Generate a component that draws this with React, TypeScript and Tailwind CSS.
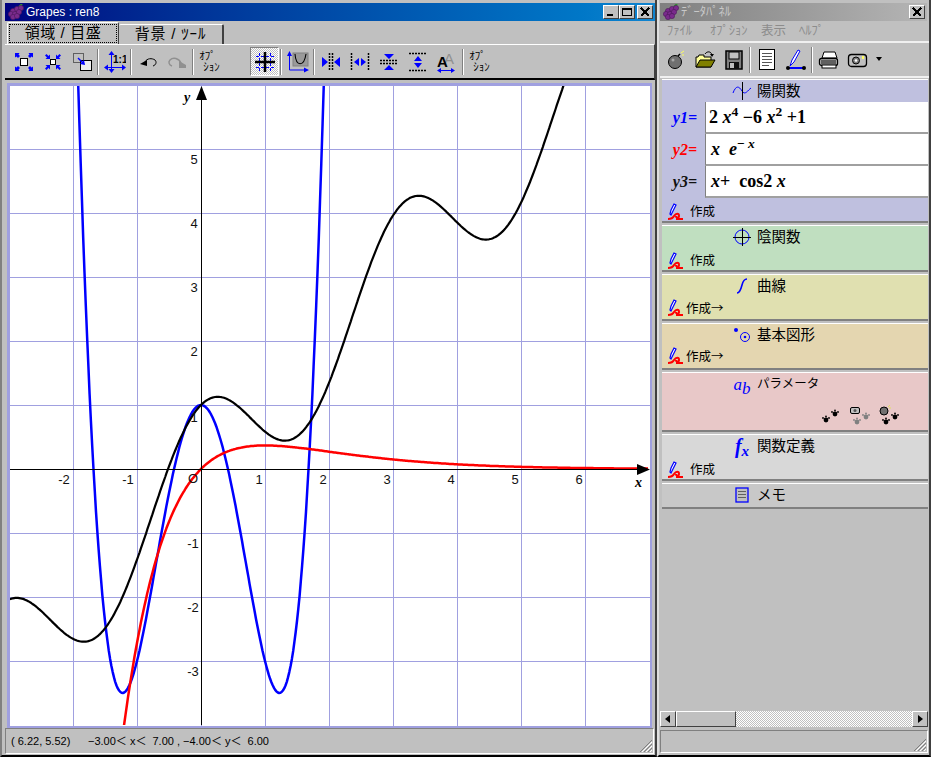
import type { ReactNode } from "react";

const X0 = 194; // x=0 within the plot svg
const Y0 = 386; // y=0 within the plot svg
const U = 64;

const raised = "border border-t-white border-l-white border-r-[#404040] border-b-[#404040] bg-[#c0c0c0]";
const dither = "bg-[repeating-conic-gradient(#c0c0c0_0_25%,#fff_0_50%)] bg-[length:2px_2px]";

function curve(f: (x: number) => number) {
  let d = "";
  let pen = false;
  for (let x = -3; x <= 7; x += 0.02) {
    const y = f(x);
    if (y > 7 || y < -5) {
      pen = false;
      continue;
    }
    d += `${pen ? "L" : "M"}${(X0 + x * U).toFixed(1)} ${(Y0 - y * U).toFixed(1)} `;
    pen = true;
  }
  return d;
}

function Plot() {
  const vs = [-2, -1, 0, 1, 2, 3, 4, 5, 6];
  const hs = [-3, -2, -1, 1, 2, 3, 4, 5];
  return (
    <svg width="645" height="645" className="block bg-white">
      <defs>
        <clipPath id="plot">
          <rect x="2" y="3" width="639" height="639" />
        </clipPath>
      </defs>
      <g stroke="#a0a0e0" shapeRendering="crispEdges">
        {vs.map((v) => (
          <line key={v} x1={X0 + v * U + 0.5} x2={X0 + v * U + 0.5} y1="0" y2="645" />
        ))}
        {hs.map((h) => (
          <line key={h} y1={Y0 - h * U + 0.5} y2={Y0 - h * U + 0.5} x1="0" x2="645" />
        ))}
      </g>
      <g clipPath="url(#plot)" fill="none" strokeLinejoin="round">
        <path d={curve((x) => 2 * x ** 4 - 6 * x ** 2 + 1)} stroke="#0000ff" strokeWidth="2.5" />
        <path d={curve((x) => x + Math.cos(2 * x))} stroke="#000" strokeWidth="2.2" />
        <path d={curve((x) => x * Math.exp(-x))} stroke="#ff0000" strokeWidth="2.5" />
      </g>
      <g stroke="#000" shapeRendering="crispEdges">
        <line x1="2" x2="632" y1={Y0 + 0.5} y2={Y0 + 0.5} />
        <line x1={X0 + 0.5} x2={X0 + 0.5} y1="14" y2="642" />
      </g>
      <path d={`M${X0 + 0.5} 3 L${X0 - 5} 17 L${X0 + 6} 17 Z`} fill="#000" />
      <path d={`M643 ${Y0 + 0.5} L630 ${Y0 - 5} L630 ${Y0 + 6} Z`} fill="#000" />
      <g fontFamily="Liberation Sans" fontSize="13" fill="#111">
        {[-2, -1, 1, 2, 3, 4, 5, 6].map((v) => (
          <text key={v} x={X0 + v * U + (v < 0 ? -9 : -6)} y={Y0 + 15} textAnchor="middle">
            {v}
          </text>
        ))}
        <text x={X0 - 8} y={Y0 + 14} textAnchor="middle">O</text>
        {[5, 4, 3, 2, 1].map((h) => (
          <text key={h} x={X0 - 7} y={Y0 - h * U + (h === 1 ? 17 : 15)} textAnchor="middle">
            {h}
          </text>
        ))}
        {[-1, -2, -3].map((h) => (
          <text key={h} x={X0 - 8} y={Y0 - h * U + 15} textAnchor="middle">
            {h}
          </text>
        ))}
      </g>
      <g fontFamily="Liberation Serif" fontSize="14" fontWeight="bold" fontStyle="italic" fill="#000">
        <text x="628" y={Y0 + 18}>x</text>
        <text x={X0 - 17} y="19">y</text>
      </g>
      <rect x="1" y="1" width="643" height="643" fill="none" stroke="#a0a0e0" strokeWidth="3" shapeRendering="crispEdges" />
    </svg>
  );
}

function Grape({ size = 16 }: { size?: number }) {
  const dots = [
    [5, 7], [9, 5], [13, 4], [3, 10], [7, 10], [11, 8], [5, 13], [9, 12],
  ];
  return (
    <svg width={size} height={size} viewBox="0 0 16 16" className="shrink-0">
      <path d="M11 3 L14 0" stroke="#2f8f2f" strokeWidth="2" />
      {dots.map(([x, y]) => (
        <circle key={`${x}-${y}`} cx={x} cy={y} r="2.6" fill="#7a2a8c" stroke="#4b1a5a" strokeWidth="0.6" />
      ))}
    </svg>
  );
}

function WinBtn({ children, className }: { children: ReactNode; className?: string }) {
  return (
    <div className={`flex h-[14px] w-[16px] items-center justify-center ${raised} ${className ?? ""}`}>
      <svg width="12" height="10" viewBox="0 0 12 10" shapeRendering="crispEdges">
        {children}
      </svg>
    </div>
  );
}

const Close = () => <path d="M2 1 L10 9 M10 1 L2 9" stroke="#000" strokeWidth="1.6" />;

function Ic({ children }: { children: ReactNode }) {
  return (
    <svg width="22" height="22" viewBox="0 0 22 22" className="block">
      {children}
    </svg>
  );
}

function Btn({ children, pressed }: { children: ReactNode; pressed?: boolean }) {
  return (
    <div
      className={`flex h-[29px] w-[29px] shrink-0 items-center justify-center ${
        pressed ? `border border-t-[#808080] border-l-[#808080] border-r-white border-b-white ${dither}` : ""
      }`}
    >
      {children}
    </div>
  );
}

function Sep({ className }: { className?: string }) {
  return <div className={`mx-px h-[26px] w-[2px] shrink-0 border-l border-l-[#808080] border-r border-r-white ${className ?? ""}`} />;
}

function OptBtn() {
  return (
    <Btn>
      <div className="text-[11px] leading-[11px] text-black">
        <div>ｵﾌﾟ</div>
        <div className="pl-[4px]">ｼｮﾝ</div>
      </div>
    </Btn>
  );
}

const B = "#0000ff";
const Arrow = ({ d }: { d: string }) => <path d={d} fill={B} />;

function ZoomOutIcon() {
  return (
    <Ic>
      <rect x="7.5" y="7.5" width="7" height="7" fill="#fff" stroke="#000" />
      <Arrow d="M2 2 H6.5 L5.5 3.5 L7 5 L5 7 L3.5 5.5 L2 6.5 Z" />
      <Arrow d="M20 2 H15.5 L16.5 3.5 L15 5 L17 7 L18.5 5.5 L20 6.5 Z" />
      <Arrow d="M2 20 H6.5 L5.5 18.5 L7 17 L5 15 L3.5 16.5 L2 15.5 Z" />
      <Arrow d="M20 20 H15.5 L16.5 18.5 L15 17 L17 15 L18.5 16.5 L20 15.5 Z" />
    </Ic>
  );
}

function ZoomInIcon() {
  return (
    <Ic>
      <rect x="8.5" y="8.5" width="5" height="5" fill="#fff" stroke="#000" />
      <Arrow d="M8 8 H3.5 L5 6.5 L3 4.5 L4.5 3 L6.5 5 L8 3.5 Z" />
      <Arrow d="M14 8 H18.5 L17 6.5 L19 4.5 L17.5 3 L15.5 5 L14 3.5 Z" />
      <Arrow d="M8 14 H3.5 L5 15.5 L3 17.5 L4.5 19 L6.5 17 L8 18.5 Z" />
      <Arrow d="M14 14 H18.5 L17 15.5 L19 17.5 L17.5 19 L15.5 17 L14 18.5 Z" />
    </Ic>
  );
}

function MoveIcon() {
  return (
    <Ic>
      <rect x="2.5" y="2.5" width="10" height="9" fill="none" stroke="#000" strokeDasharray="1 1" />
      <rect x="9.5" y="9.5" width="11" height="10" fill="#eee" stroke="#000" />
      <path d="M7 7 L12 12" stroke={B} strokeWidth="1.4" />
      <path d="M14 14 L9 13 L13 9 Z" fill={B} />
    </Ic>
  );
}

function OneOneIcon() {
  return (
    <Ic>
      <path d="M7.5 1 V21 M1 16.5 H21" stroke={B} />
      <path d="M7.5 0 L4.5 4 H10.5 Z M7.5 22 L4.5 18 H10.5 Z M0 16.5 L4 13.5 V19.5 Z M22 16.5 L18 13.5 V19.5 Z" fill={B} />
      <text x="9" y="12" fontFamily="Liberation Sans" fontSize="10" fontWeight="bold" fill="#000">1:1</text>
    </Ic>
  );
}

function UndoIcon() {
  return (
    <Ic>
      <path d="M8 11 C10 7 15 7 18 9 C20 11 19 14 16 15" fill="none" stroke="#000" />
      <path d="M3 13 L10 9 V15 Z" fill="#000" />
    </Ic>
  );
}

function RedoIcon() {
  return (
    <Ic>
      <path d="M15 12 C13 7 7 6 4 9 C2 11 3 14 6 15" fill="none" stroke="#909090" strokeWidth="1.5" />
      <path d="M20 14 L13 10 V17 H20 Z" fill="#909090" />
    </Ic>
  );
}

function GridIcon() {
  return (
    <Ic>
      <path d="M5.5 2 V20 M16.5 2 V20 M2 5.5 H20 M2 16.5 H20" stroke={B} strokeDasharray="3 2" />
      <path d="M11 1 V21 M1 11 H21" stroke="#000" strokeWidth="2.5" />
    </Ic>
  );
}

function AutoIcon() {
  return (
    <Ic>
      <rect x="6" y="2" width="15" height="13" fill="#9a9a9a" stroke="#808080" />
      <path d="M8 3 C9 16 17 16 19 3" fill="none" stroke="#000" strokeWidth="1.1" />
      <path d="M2.5 2 V19 H20" fill="none" stroke={B} />
      <path d="M2.5 0 L0 5 H5 Z M22 19 L17 16.5 V21.5 Z" fill={B} />
    </Ic>
  );
}

const dash = "2 1";

function SqueezeH({ out }: { out?: boolean }) {
  return (
    <Ic>
      <path
        d={out ? "M2.5 2 V20 M19.5 2 V20" : "M9.5 2 V20 M12.5 2 V20"}
        stroke="#000"
        strokeWidth="1.5"
        strokeDasharray={dash}
      />
      <path d={out ? "M5 11 L10 7 V15 Z M17 11 L12 7 V15 Z" : "M8 11 L2 6 V16 Z M14 11 L20 6 V16 Z"} fill={B} />
    </Ic>
  );
}

function SqueezeV({ out }: { out?: boolean }) {
  return (
    <Ic>
      <path
        d={out ? "M2 2.5 H20 M2 19.5 H20" : "M2 9.5 H20 M2 12.5 H20"}
        stroke="#000"
        strokeWidth="1.5"
        strokeDasharray={dash}
      />
      <path d={out ? "M11 5 L7 10 H15 Z M11 17 L7 12 H15 Z" : "M11 8 L6 3 H16 Z M11 14 L6 19 H16 Z"} fill={B} />
    </Ic>
  );
}

function FontIcon() {
  return (
    <Ic>
      <text x="8" y="13" fontFamily="Liberation Sans" fontSize="15" fill="#909090">A</text>
      <text x="1" y="16" fontFamily="Liberation Sans" fontSize="15" fontWeight="bold" fill="#000">A</text>
      <path d="M3 19.5 H17" stroke={B} />
      <path d="M1 19.5 L5 17 V22 Z M19 19.5 L15 17 V22 Z" fill={B} />
    </Ic>
  );
}

function BombIcon() {
  return (
    <Ic>
      <circle cx="10" cy="13" r="6.5" fill="#707070" stroke="#000" />
      <circle cx="8" cy="11" r="1.5" fill="#a8a8a8" />
      <path d="M13 7 L15 5" stroke="#000" strokeWidth="1.5" />
      <path d="M16 4 L19 2 M17 6 L19 6" stroke="#ffff60" />
    </Ic>
  );
}

function FolderIcon() {
  return (
    <Ic>
      <path d="M2 8 H4 L5 6 H10 V8 H17 V18 H2 Z" fill="#ffff99" stroke="#000" />
      <path d="M2 18 L6 11 H21 L17 18 Z" fill="#808000" stroke="#000" />
      <path d="M11 5 C13 2 17 2 18 6" fill="none" stroke="#000" />
      <path d="M16 5 H20 L18 8 Z" fill="#000" />
    </Ic>
  );
}

function FloppyIcon() {
  return (
    <Ic>
      <path d="M3 2 H19 V20 H3 Z" fill="#808080" stroke="#000" strokeWidth="1.5" />
      <rect x="6" y="3" width="10" height="7" fill="#c0c0c0" stroke="#000" />
      <rect x="6" y="13" width="10" height="7" fill="#111" />
      <rect x="7" y="14" width="4" height="5" fill="#c0c0c0" />
    </Ic>
  );
}

function DocIcon() {
  return (
    <Ic>
      <rect x="3.5" y="0.5" width="15" height="20" fill="#fff" stroke="#000" />
      <path d="M6 4.5 H16 M6 7.5 H16 M6 10.5 H16 M6 13.5 H16 M6 16.5 H13" stroke="#555" />
    </Ic>
  );
}

function PenAxisIcon() {
  return (
    <Ic>
      <path d="M5 17 L7 11 L13 1 L15 2 L9 13 Z" fill="#fff" stroke={B} />
      <path d="M3 19 H18" stroke={B} strokeWidth="2" />
      <circle cx="3" cy="19" r="2" fill="#000" />
      <circle cx="19" cy="19" r="2" fill="#000" />
    </Ic>
  );
}

function PrinterIcon() {
  return (
    <Ic>
      <path d="M6 3 H17 L19 9 H4 Z" fill="#fff" stroke="#000" />
      <rect x="1.5" y="9.5" width="18" height="7" rx="2" fill="#c0c0c0" stroke="#000" strokeWidth="1.3" />
      <path d="M3 12 H18 M3 14 H18" stroke="#000" />
      <rect x="4" y="16" width="14" height="3" fill="#fff" stroke="#000" />
    </Ic>
  );
}

function CameraIcon() {
  return (
    <Ic>
      <rect x="1.5" y="5.5" width="18" height="12" rx="3" fill="#c0c0c0" stroke="#000" strokeWidth="1.3" />
      <circle cx="9" cy="11.5" r="3.5" fill="#808080" stroke="#000" />
      <circle cx="9" cy="11.5" r="1.3" fill="#fff" />
      <rect x="15" y="7" width="2" height="3" fill="#ffff60" />
    </Ic>
  );
}

function PenCreate() {
  return (
    <svg width="16" height="18" viewBox="0 0 16 18" className="shrink-0">
      <path d="M2 11 L3 7 L6 1 L8 2 L5 8 L3 12 Z" fill="#fff" stroke="#0000ff" strokeWidth="1.2" />
      <path d="M0 16 C3 16 5 15 6 13 C8 10 11 10 11 13 C11 15 8 15 8 13 M8 16 H15" fill="none" stroke="#ff0000" strokeWidth="2" />
    </svg>
  );
}

function Create({ arrow, className }: { arrow?: boolean; className?: string }) {
  return (
    <div className={`flex items-center pl-[6px] text-[12.5px] leading-[18px] text-black ${className ?? ""}`}>
      <PenCreate />
      {arrow ? (
        <span className="ml-[2px] font-['Noto_Sans_CJK_JP',sans-serif]">作成→</span>
      ) : (
        <span className="ml-[6px]">作成</span>
      )}
    </div>
  );
}

function Section({
  bg,
  icon,
  title,
  children,
  height,
}: {
  bg: string;
  icon: ReactNode;
  title: ReactNode;
  children?: ReactNode;
  height: string;
}) {
  return (
    <div className={`mb-[2px] flex flex-col border-t border-b-2 border-t-white border-b-[#808080] ${bg} ${height}`}>
      <div className="flex h-[22px] shrink-0 items-center pl-[68px] text-[14.5px] leading-[22px] text-black">
        <span className="flex w-[27px] shrink-0 justify-center pr-[3px]">{icon}</span>
        {title}
      </div>
      {children}
    </div>
  );
}

function Eq({ label, color, children }: { label: string; color: string; children: ReactNode }) {
  return (
    <div className="flex h-[32px] items-stretch">
      <div className={`flex w-[43px] items-center justify-end pr-[8px] font-['Liberation_Serif',serif] text-[16px] font-bold italic ${color}`}>
        {label}
      </div>
      <div className="flex flex-1 items-center border-b-2 border-l border-b-[#a0a0a0] border-l-[#808080] bg-white pl-[2px] font-['Liberation_Serif',serif] text-[18px] font-bold text-black">
        {children}
      </div>
    </div>
  );
}

function Paw({ x, y, color }: { x: number; y: number; color: string }) {
  return (
    <g fill={color}>
      <circle cx={x} cy={y} r="2.4" />
      <circle cx={x - 3} cy={y - 2} r="0.9" />
      <circle cx={x} cy={y - 3.5} r="0.9" />
      <circle cx={x + 3} cy={y - 2} r="0.9" />
    </g>
  );
}

// the three little paw-print buttons in the parameter section
function ParamIcons() {
  return (
    <svg width="80" height="22" viewBox="0 0 80 22" className="block">
      <Paw x={5} y={15} color="#000" />
      <Paw x={14} y={9} color="#000" />
      <rect x="29.5" y="2.5" width="9" height="6" rx="1.5" fill="#c0c0c0" stroke="#000" />
      <circle cx="34" cy="5.5" r="1.5" fill="#555" />
      <Paw x={36} y={17} color="#808080" />
      <Paw x={45} y={12} color="#808080" />
      <circle cx="63" cy="6" r="4" fill="#707070" stroke="#000" />
      <path d="M67 2 L69 0 M68 3 L70 3" stroke="#e0e060" />
      <Paw x={65} y={17} color="#000" />
      <Paw x={74} y={12} color="#000" />
    </svg>
  );
}

function Grip() {
  return (
    <svg width="14" height="14" viewBox="0 0 14 14" className="block" shapeRendering="crispEdges">
      <path d="M13 1 L1 13 M13 5 L5 13 M13 9 L9 13" stroke="#808080" strokeWidth="1.2" />
      <path d="M13 3 L3 13 M13 7 L7 13 M13 11 L11 13" stroke="#fff" />
    </svg>
  );
}

function ScrollBtn({ dir }: { dir: "l" | "r" }) {
  return (
    <div className={`flex h-[16px] w-[16px] shrink-0 items-center justify-center ${raised}`}>
      <svg width="6" height="8" viewBox="0 0 6 8">
        <path d={dir === "l" ? "M5 0 V8 L0 4 Z" : "M1 0 V8 L6 4 Z"} fill="#000" />
      </svg>
    </div>
  );
}

export default function App() {
  return (
    <div className="flex h-[757px] w-[931px] overflow-hidden bg-[#c0c0c0] font-['Liberation_Sans','Noto_Sans_CJK_JP',sans-serif] text-black">
      {/* graph window */}
      <div className="flex h-[757px] w-[657px] shrink-0 flex-col border-r-2 border-b-2 border-l-2 border-r-[#404040] border-b-[#000] border-l-[#808080] pt-[3px] pl-[3px]">
        <div className="flex h-[18px] shrink-0 items-center bg-gradient-to-r from-[#000080] to-[#1084d0] pr-[2px] pl-[3px] text-white">
          <Grape />
          <span className="ml-[2px] text-[12px] leading-[18px]">Grapes : ren8</span>
          <div className="ml-auto flex items-center">
            <WinBtn>
              <path d="M2 8 H8" stroke="#000" strokeWidth="2" />
            </WinBtn>
            <WinBtn>
              <path d="M1.5 1.5 H10.5 V8.5 H1.5 Z" fill="none" stroke="#000" />
              <path d="M1 1.5 H11" stroke="#000" strokeWidth="2" />
            </WinBtn>
            <WinBtn className="ml-[2px]">
              <Close />
            </WinBtn>
          </div>
        </div>

        {/* tabs */}
        <div className="flex h-[23px] shrink-0 items-end pl-[2px]">
          <div className="h-[22px] w-[112px] rounded-t-[2px] border-t border-r border-l border-t-white border-r-[#404040] border-l-white p-[1px]">
            <div className="flex h-full items-center justify-center whitespace-pre border border-dotted border-black text-[15px] tracking-[0.6px]">
              領域 / 目盛
            </div>
          </div>
          <div className="flex h-[20px] w-[105px] items-center justify-center whitespace-pre rounded-t-[2px] border-t border-r-2 border-t-white border-r-[#404040] text-[15px] tracking-[0.8px]">
            背景 / ﾂｰﾙ
          </div>
        </div>

        {/* toolbar */}
        <div className="flex h-[36px] shrink-0 items-center border-t border-r border-b-2 border-t-white border-r-[#404040] border-b-black pl-[4px]">
          <Btn><ZoomOutIcon /></Btn>
          <Btn><ZoomInIcon /></Btn>
          <Btn><MoveIcon /></Btn>
          <Sep />
          <Btn><OneOneIcon /></Btn>
          <Sep />
          <Btn><UndoIcon /></Btn>
          <Btn><RedoIcon /></Btn>
          <Sep />
          <OptBtn />
          <div className="w-[26px] shrink-0" />
          <Btn pressed><GridIcon /></Btn>
          <Sep />
          <Btn><AutoIcon /></Btn>
          <Sep />
          <Btn><SqueezeH /></Btn>
          <Btn><SqueezeH out /></Btn>
          <Btn><SqueezeV /></Btn>
          <Btn><SqueezeV out /></Btn>
          <Btn><FontIcon /></Btn>
          <Sep />
          <OptBtn />
        </div>

        <div className="flex-1 pt-[3px] pl-[2px]">
          <Plot />
        </div>

        {/* status */}
        <div className="relative mr-[1px] mb-[1px] flex h-[26px] shrink-0 items-center whitespace-pre border border-t-[#808080] border-r-white border-b-white border-l-[#808080] pl-[5px] text-[11px]">
          <span className="w-[77px]">( 6.22, 5.52)</span>
          <span>−3.00＜ x＜  7.00 , −4.00＜ y＜  6.00</span>
          <span className="absolute right-0 bottom-0">
            <Grip />
          </span>
        </div>
      </div>

      {/* data panel */}
      <div className="flex h-[757px] w-[274px] shrink-0 flex-col border-r-2 border-b-2 border-l-2 border-r-[#404040] border-b-black border-l-[#dfdfdf] pt-[3px] pl-[1px]">
        <div className="mr-[2px] flex h-[18px] shrink-0 items-center bg-gradient-to-r from-[#808080] to-[#b5b5b5] pr-[2px] pl-[3px] text-[#c8c8c8]">
          <Grape />
          <span className="ml-[2px] text-[12.5px] leading-[18px]">ﾃﾞｰﾀﾊﾟﾈﾙ</span>
          <WinBtn className="ml-auto">
            <Close />
          </WinBtn>
        </div>

        <div className="flex h-[20px] shrink-0 items-center pl-[7px] text-[12.5px] text-[#8c8c8c]">
          <span className="w-[43px]">ﾌｧｲﾙ</span>
          <span className="w-[51px]">ｵﾌﾟｼｮﾝ</span>
          <span className="w-[38px]">表示</span>
          <span>ﾍﾙﾌﾟ</span>
        </div>

        <div className="flex h-[37px] shrink-0 items-center border-t-2 border-b-2 border-t-[#f0f0f0] border-b-[#f0f0f0] pl-[1px]">
          <Btn><BombIcon /></Btn>
          <Btn><FolderIcon /></Btn>
          <Btn><FloppyIcon /></Btn>
          <Sep className="mx-[1px]" />
          <Btn><DocIcon /></Btn>
          <Btn><PenAxisIcon /></Btn>
          <Sep className="mx-[1px]" />
          <Btn><PrinterIcon /></Btn>
          <Btn><CameraIcon /></Btn>
          <svg width="8" height="5" viewBox="0 0 8 5" className="ml-[3px]">
            <path d="M1 0 H7 L4 4 Z" fill="#000" />
          </svg>
        </div>

        {/* accordion */}
        <div className="flex-1 overflow-hidden pt-[1px] pr-[1px] pl-[2px]">
          <Section
            bg="bg-[#bfc0df]"
            height="h-[144px]"
            title="陽関数"
            icon={
              <svg width="20" height="20" viewBox="0 0 20 20" className="block">
                <path d="M1 12 C4 4 7 5 10 10 C13 15 16 9 19 7" fill="none" stroke="#0000ff" />
                <path d="M10.5 1 V19" stroke="#000" />
              </svg>
            }
          >
            <Eq label="y1=" color="text-[#0000ff]">
              <span className="pl-[1px]">2&nbsp;<i>x</i><sup>4</sup>&nbsp;−6&nbsp;<i>x</i><sup>2</sup>&nbsp;+1</span>
            </Eq>
            <Eq label="y2=" color="text-[#ff0000]">
              <span className="pl-[3px]"><i>x</i>&nbsp;&nbsp;<i>e</i><sup>−&nbsp;<i>x</i></sup></span>
            </Eq>
            <Eq label="y3=" color="text-[#111111]">
              <span className="pl-[3px]"><i>x</i>+&nbsp;&nbsp;cos2&nbsp;<i>x</i></span>
            </Eq>
            <Create className="pt-[5px]" />
          </Section>
          <Section
            bg="bg-[#c0dfc0]"
            height="h-[47px]"
            title="陰関数"
            icon={
              <svg width="20" height="20" viewBox="0 0 20 20" className="block">
                <circle cx="10" cy="10" r="7" fill="none" stroke="#0000ff" />
                <path d="M10.5 1 V19 M1 10.5 H19" stroke="#000" />
              </svg>
            }
          >
            <Create className="pt-[4px]" />
          </Section>
          <Section
            bg="bg-[#e0e0b0]"
            height="h-[47px]"
            title="曲線"
            icon={
              <svg width="14" height="18" viewBox="0 0 14 18" className="block">
                <path d="M2 16 C5 16 6 12 7 8 C8 4 9 2 12 2" fill="none" stroke="#0000ff" strokeWidth="1.6" />
              </svg>
            }
          >
            <Create arrow className="pt-[2px]" />
          </Section>
          <Section
            bg="bg-[#e4d6b0]"
            height="h-[47px]"
            title="基本図形"
            icon={
              <svg width="18" height="18" viewBox="0 0 18 18" className="block">
                <circle cx="3" cy="4" r="2" fill="#0000ff" />
                <circle cx="12" cy="11" r="4.5" fill="none" stroke="#0000ff" />
                <circle cx="12" cy="11" r="1.3" fill="#0000ff" />
              </svg>
            }
          >
            <Create arrow className="pt-[1px]" />
          </Section>
          <Section
            bg="bg-[#e8c8c8]"
            height="h-[60px]"
            title={<span className="text-[12.5px]">パラメータ</span>}
            icon={
              <span className="font-['Liberation_Serif',serif] text-[17px] leading-[15px] text-[#0000ff] italic">
                a<sub className="text-[17px]">b</sub>
              </span>
            }
          >
            <div className="flex justify-end pt-[10px] pr-[27px]">
              <ParamIcons />
            </div>
          </Section>
          <Section
            bg="bg-[#d8d8d8]"
            height="h-[47px]"
            title="関数定義"
            icon={
              <span className="font-['Liberation_Serif',serif] text-[20px] leading-[17px] font-bold text-[#0000ff] italic">
                f<sub className="text-[15px]">x</sub>
              </span>
            }
          >
            <Create className="pt-[4px]" />
          </Section>
          <Section
            bg="bg-[#c8c8c8]"
            height="h-[26px]"
            title="メモ"
            icon={
              <svg width="14" height="16" viewBox="0 0 14 16" className="block">
                <rect x="1" y="1" width="12" height="14" fill="#c0c0c0" stroke="#0000ff" strokeWidth="1.3" />
                <path d="M3 4.5 H11 M3 7.5 H11 M3 10.5 H11" stroke="#606060" />
              </svg>
            }
          />
        </div>

        {/* scrollbar */}
        <div className="mr-[1px] flex h-[17px] shrink-0 items-stretch">
          <ScrollBtn dir="l" />
          <div className={`h-[16px] w-[60px] shrink-0 ${raised}`} />
          <div className={`h-[16px] flex-1 ${dither}`} />
          <ScrollBtn dir="r" />
        </div>

        <div className="relative mt-[2px] mr-[1px] mb-[2px] h-[23px] shrink-0 border border-t-[#808080] border-r-white border-b-white border-l-[#808080]">
          <span className="absolute right-0 bottom-0">
            <Grip />
          </span>
        </div>
      </div>
    </div>
  );
}
